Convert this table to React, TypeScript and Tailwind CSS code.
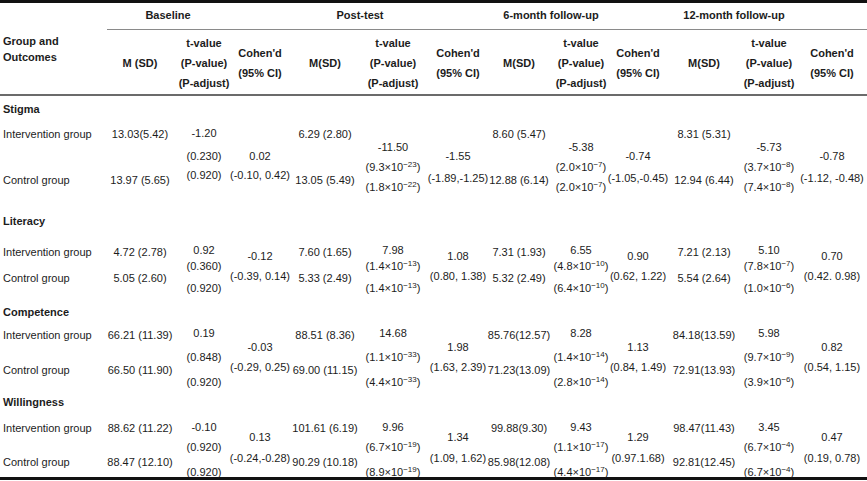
type Point = {
  m: [string, string]
  t: [string, string, string]
  c: [string, string]
}

type Section = {
  name: string
  h: string
  lab: string[]
  tA: string[]
  cA: string[]
  tB: string[]
  cB: string[]
  data: Point[]
}

const GRID =
  'grid grid-cols-[107px_66px_62px_50px_80px_56px_74px_48px_76px_38px_94px_36px_90px]'

const sections: Section[] = [
  {
    name: 'Stigma',
    h: 'h-[112px]',
    lab: ['mt-[11px]', 'mt-[32px]'],
    tA: ['mt-[10px]', 'mt-[9px]', 'mt-[5px]'],
    cA: ['mt-[33px]', 'mt-[5px]'],
    tB: ['mt-[24px]', 'mt-[6px]', 'mt-[6px]'],
    cB: ['mt-[33px]', 'mt-[8px]'],
    data: [
      { m: ['13.03(5.42)', '13.97 (5.65)'], t: ['-1.20', '0.230', '0.920'], c: ['0.02', '(-0.10, 0.42)'] },
      { m: ['6.29 (2.80)', '13.05 (5.49)'], t: ['-11.50', '9.3e-23', '1.8e-22'], c: ['-1.55', '(-1.89,-1.25)'] },
      { m: ['8.60 (5.47)', '12.88 (6.14)'], t: ['-5.38', '2.0e-7', '2.0e-7'], c: ['-0.74', '(-1.05,-0.45)'] },
      { m: ['8.31 (5.31)', '12.94 (6.44)'], t: ['-5.73', '3.7e-8', '7.4e-8'], c: ['-0.78', '(-1.12, -0.48)'] },
    ],
  },
  {
    name: 'Literacy',
    h: 'h-[91px]',
    lab: ['mt-[17px]', 'mt-[12px]'],
    tA: ['mt-[15px]', 'mt-[2px]', 'mt-[8px]'],
    cA: ['mt-[21px]', 'mt-[6px]'],
    tB: ['mt-[15px]', 'mt-[2px]', 'mt-[8px]'],
    cB: ['mt-[21px]', 'mt-[6px]'],
    data: [
      { m: ['4.72 (2.78)', '5.05 (2.60)'], t: ['0.92', '0.360', '0.920'], c: ['-0.12', '(-0.39, 0.14)'] },
      { m: ['7.60 (1.65)', '5.33 (2.49)'], t: ['7.98', '1.4e-13', '1.4e-13'], c: ['1.08', '(0.80, 1.38)'] },
      { m: ['7.31 (1.93)', '5.32 (2.49)'], t: ['6.55', '4.8e-10', '6.4e-10'], c: ['0.90', '(0.62, 1.22)'] },
      { m: ['7.21 (2.13)', '5.54 (2.64)'], t: ['5.10', '7.8e-7', '1.0e-6'], c: ['0.70', '(0.42. 0.98)'] },
    ],
  },
  {
    name: 'Competence',
    h: 'h-[90px]',
    lab: ['mt-[9px]', 'mt-[21px]'],
    tA: ['mt-[7px]', 'mt-[10px]', 'mt-[11px]'],
    cA: ['mt-[21px]', 'mt-[6px]'],
    tB: ['mt-[7px]', 'mt-[10px]', 'mt-[11px]'],
    cB: ['mt-[21px]', 'mt-[6px]'],
    data: [
      { m: ['66.21 (11.39)', '66.50 (11.90)'], t: ['0.19', '0.848', '0.920'], c: ['-0.03', '(-0.29, 0.25)'] },
      { m: ['88.51 (8.36)', '69.00 (11.15)'], t: ['14.68', '1.1e-33', '4.4e-33'], c: ['1.98', '(1.63, 2.39)'] },
      { m: ['85.76(12.57)', '71.23(13.09)'], t: ['8.28', '1.4e-14', '2.8e-14'], c: ['1.13', '(0.84, 1.49)'] },
      { m: ['84.18(13.59)', '72.91(13.93)'], t: ['5.98', '9.7e-9', '3.9e-6'], c: ['0.82', '(0.54, 1.15)'] },
    ],
  },
  {
    name: 'Willingness',
    h: 'h-[88px]',
    lab: ['mt-[12px]', 'mt-[20px]'],
    tA: ['mt-[11px]', 'mt-[6px]', 'mt-[11px]'],
    cA: ['mt-[21px]', 'mt-[7px]'],
    tB: ['mt-[11px]', 'mt-[6px]', 'mt-[11px]'],
    cB: ['mt-[21px]', 'mt-[7px]'],
    data: [
      { m: ['88.62 (11.22)', '88.47 (12.10)'], t: ['-0.10', '0.920', '0.920'], c: ['0.13', '(-0.24,-0.28)'] },
      { m: ['101.61 (6.19)', '90.29 (10.18)'], t: ['9.96', '6.7e-19', '8.9e-19'], c: ['1.34', '(1.09, 1.62)'] },
      { m: ['99.88(9.30)', '85.98(12.08)'], t: ['9.43', '1.1e-17', '4.4e-17'], c: ['1.29', '(0.97.1.68)'] },
      { m: ['98.47(11.43)', '92.81(12.45)'], t: ['3.45', '6.7e-4', '6.7e-4'], c: ['0.47', '(0.19, 0.78)'] },
    ],
  },
]

// p-values: plain "0.230" or scientific "9.3e-23"
const PVal = ({ v }: { v: string }) => {
  const [base, exp] = v.split('e')
  if (!exp) return <>({v})</>
  return (
    <>
      ({base}×10<sup className="text-[8px]">{exp.replace('-', '−')}</sup>)
    </>
  )
}

const Col = ({ lines, items, left }: { lines: string[]; items: React.ReactNode[]; left?: boolean }) => (
  <div className={`flex flex-col whitespace-nowrap ${left ? 'items-start pl-[3px]' : 'items-center'}`}>
    {items.map((it, i) => (
      <div key={i} className={`leading-[14px] ${lines[i]}`}>
        {it}
      </div>
    ))}
  </div>
)

const groups = [
  { label: 'Baseline', w: 'w-[122px]' },
  { label: 'Post-test', w: 'w-[262px]' },
  { label: '6-month follow-up', w: 'w-[120px]' },
  { label: '12-month follow-up', w: 'w-[246px]' },
]

const HeadCols = ({ first }: { first: boolean }) => (
  <>
    <div className="flex items-center justify-center whitespace-nowrap pt-[2px]">{first ? 'M (SD)' : 'M(SD)'}</div>
    <div className="flex flex-col items-center justify-center leading-[20px] whitespace-nowrap pt-[2px]">
      <span>t-value</span>
      <span>(P-value)</span>
      <span>(P-adjust)</span>
    </div>
    <div className="flex flex-col items-center justify-center leading-[20px] whitespace-nowrap pt-[1px]">
      <span>Cohen'd</span>
      <span>(95% CI)</span>
    </div>
  </>
)

export default function App() {
  return (
    <div className="w-[867px] h-[481px] overflow-hidden bg-white text-[#1c1c1c] text-[11px] font-['Liberation_Sans',Arial,sans-serif]">
      <div className="border-t-[3px] border-[#111]" />

      {/* group headers */}
      <div className="flex h-[27px]">
        <div className="w-[107px] shrink-0" />
        <div className="flex flex-1 border-b border-[#8a8a8a] font-bold">
          {groups.map((g) => (
            <div key={g.label} className={`${g.w} shrink-0 flex items-center justify-center whitespace-nowrap pb-[1px]`}>
              {g.label}
            </div>
          ))}
        </div>
      </div>

      {/* column headers */}
      <div className={`${GRID} h-[64px] font-bold`}>
        <div className="pl-[3px] pt-[3px] leading-[16px] whitespace-nowrap">
          <div>Group and</div>
          <div>Outcomes</div>
        </div>
        {[0, 1, 2, 3].map((i) => (
          <HeadCols key={i} first={i === 0} />
        ))}
      </div>
      <div className="h-[2px] bg-[#6b6b6b]" />

      {sections.map((s) => (
        <div key={s.name} className={`${s.h} flex flex-col`}>
          <div className="mt-[6px] pl-[3px] leading-[14px] font-bold">{s.name}</div>
          <div className={GRID}>
            <Col left lines={s.lab} items={['Intervention group', 'Control group']} />
            {s.data.map((p, i) => (
              <div key={i} className="contents">
                <Col lines={s.lab} items={p.m} />
                <Col
                  lines={i === 0 ? s.tA : s.tB}
                  items={[p.t[0], <PVal v={p.t[1]} />, <PVal v={p.t[2]} />]}
                />
                <Col lines={i === 0 ? s.cA : s.cB} items={p.c} />
              </div>
            ))}
          </div>
        </div>
      ))}

      <div className="border-t-[3px] border-[#111]" />
    </div>
  )
}
